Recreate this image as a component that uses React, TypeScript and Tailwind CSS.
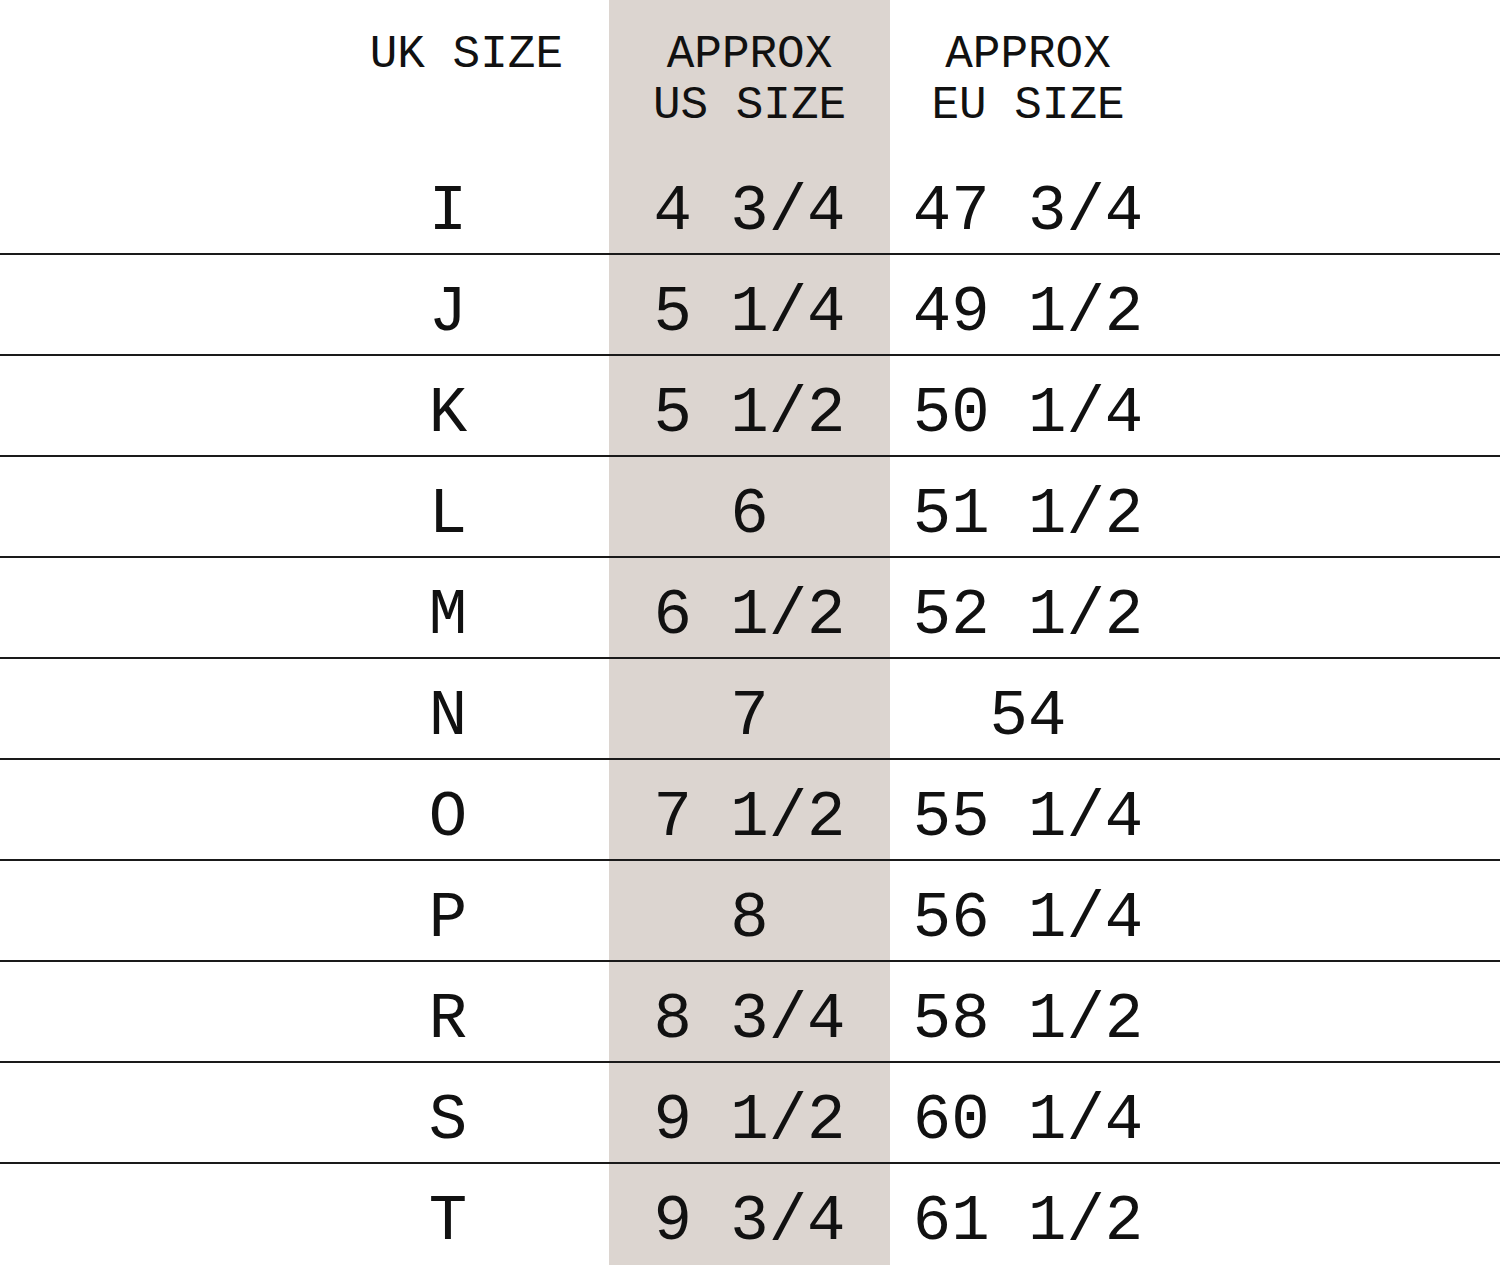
import React from 'react';

const SIZES = [
  { uk: 'I', us: '4 3/4', eu: '47 3/4' },
  { uk: 'J', us: '5 1/4', eu: '49 1/2' },
  { uk: 'K', us: '5 1/2', eu: '50 1/4' },
  { uk: 'L', us: '6', eu: '51 1/2' },
  { uk: 'M', us: '6 1/2', eu: '52 1/2' },
  { uk: 'N', us: '7', eu: '54' },
  { uk: 'O', us: '7 1/2', eu: '55 1/4' },
  { uk: 'P', us: '8', eu: '56 1/4' },
  { uk: 'R', us: '8 3/4', eu: '58 1/2' },
  { uk: 'S', us: '9 1/2', eu: '60 1/4' },
  { uk: 'T', us: '9 3/4', eu: '61 1/2' },
];

export default function App() {
  return (
    <div className="w-[1500px] h-[1266px] overflow-hidden bg-white text-[#111] font-['Liberation_Mono',monospace]">
      {/* header */}
      <div className="grid grid-cols-[609px_281px_276px_1fr] h-[154px] text-[46px] leading-[51px] whitespace-pre">
        <div className="text-right pr-[46px] pt-[30px]">UK SIZE</div>
        <div className="bg-[#dcd5d0] text-center pt-[30px]">
          APPROX
          <br />
          US SIZE
        </div>
        <div className="text-center pt-[30px]">
          APPROX
          <br />
          EU SIZE
        </div>
        <div />
      </div>

      {SIZES.map((row, i) => (
        <div
          key={row.uk}
          className={`grid grid-cols-[609px_281px_276px_1fr] h-[101px] overflow-hidden text-[64px] leading-none whitespace-pre ${i < SIZES.length - 1 ? 'border-b-2 border-[#1a1a1a]' : ''}`}
        >
          <div className="flex justify-end pt-[26px]">
            <span className="w-[322px] text-center">{row.uk}</span>
          </div>
          <div className="bg-[#dcd5d0] text-center pt-[26px]">{row.us}</div>
          <div className="text-center pt-[26px]">{row.eu}</div>
          <div />
        </div>
      ))}
    </div>
  );
}
